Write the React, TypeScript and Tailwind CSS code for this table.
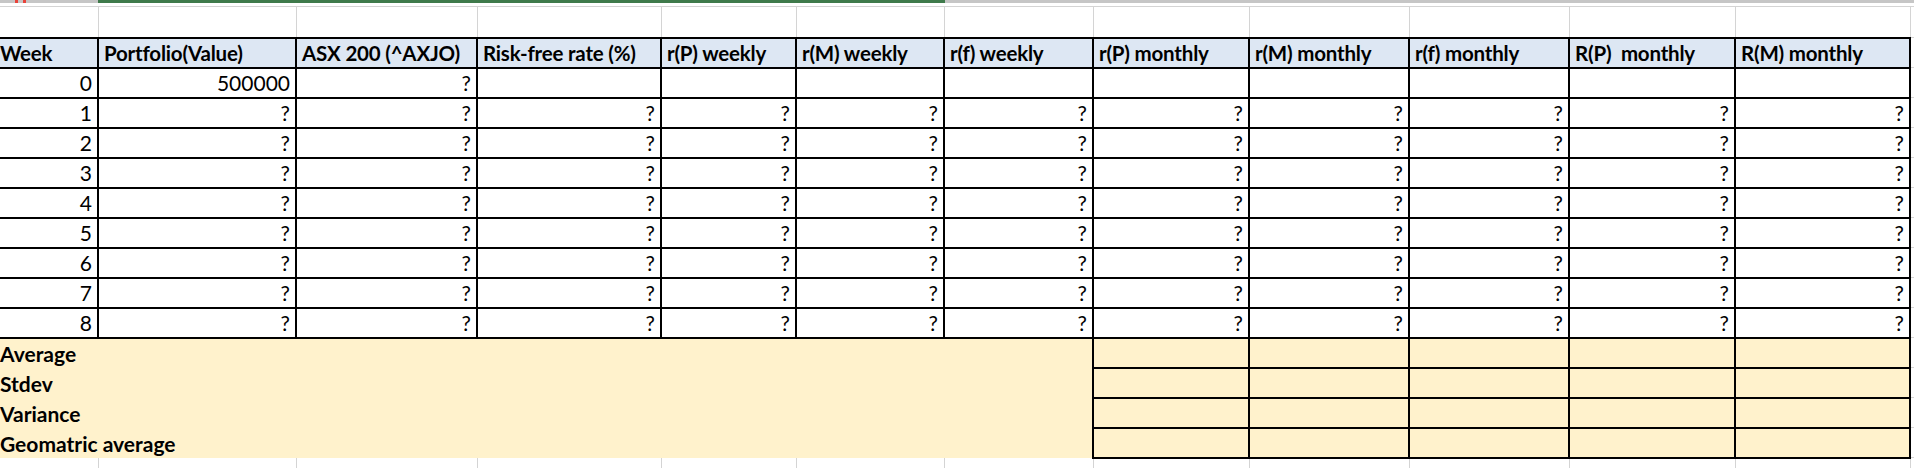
import React from "react"

// column widths measured between the border lines of the sheet
const cols = [98, 198, 181, 184, 135, 148, 149, 156, 160, 160, 166, 175, 40]

const headers = [
  "Week",
  "Portfolio(Value)",
  "ASX 200 (^AXJO)",
  "Risk-free rate (%)",
  "r(P) weekly",
  "r(M) weekly",
  "r(f) weekly",
  "r(P) monthly",
  "r(M) monthly",
  "r(f) monthly",
  "R(P)  monthly",
  "R(M) monthly",
]

const summary = ["Average", "Stdev", "Variance", "Geomatric average"]

const grid = "border border-[#d4d4d4]"
const black = "border-2 border-black"
const txt = "align-bottom leading-[22px] pb-[3px] whitespace-pre overflow-hidden"

export default function App() {
  const weeks = [0, 1, 2, 3, 4, 5, 6, 7, 8]

  return (
    <div className="w-[1914px] h-[468px] overflow-hidden bg-white text-black font-['Lato',sans-serif] text-[21px]">
      {/* top strip of the window: gray line with the green selection edge */}
      <div className="flex h-[3px] bg-[#c6c6c6]">
        <div className="w-[98px] flex gap-[5px] pl-[15px]">
          <div className="w-[3px] h-[3px] bg-[#e8433a]" />
          <div className="w-[3px] h-[3px] bg-[#e8433a]" />
        </div>
        <div className="w-[847px] bg-[#3f7a4b]" />
      </div>
      <div className="h-[3px]" />

      <table className="table-fixed border-collapse w-[1950px]">
        <colgroup>
          {cols.map((w, i) => (
            <col key={i} style={{ width: w }} />
          ))}
        </colgroup>
        <tbody>
          {/* empty row above the header */}
          <tr className="h-[31px]">
            {cols.map((_, i) => (
              <td key={i} className={`${grid} ${i === 0 ? "border-l-0" : ""}`} />
            ))}
          </tr>

          {/* header */}
          <tr className="h-[30px]">
            {headers.map((h, i) => (
              <td
                key={i}
                className={`${black} ${i === 0 ? "border-l-0 pl-0" : "pl-[5px]"} bg-[#dde7f3] font-bold text-left text-[20.5px] tracking-[-0.2px] ${txt}`}
              >
                {h}
              </td>
            ))}
            <td className={grid} />
          </tr>

          {weeks.map((w) => (
            <tr key={w} className="h-[30px]">
              <td className={`${black} border-l-0 text-right pr-[5px] ${txt}`}>{w}</td>
              <td className={`${black} text-right pr-[5px] ${txt}`}>{w === 0 ? "500000" : "?"}</td>
              <td className={`${black} text-right pr-[5px] ${txt}`}>?</td>
              {headers.slice(3).map((_, i) => (
                <td key={i} className={`${black} text-right pr-[5px] ${txt}`}>
                  {w === 0 ? "" : "?"}
                </td>
              ))}
              <td className={grid} />
            </tr>
          ))}

          {summary.map((s, r) => (
            <tr key={s} className="h-[30px]">
              <td
                colSpan={7}
                className={`bg-[#fff2cc] font-bold text-left pl-0 ${txt} border-l-0 ${
                  r === 0 ? "border-t-2 border-t-black" : "border-t border-t-transparent [border-top-style:hidden]"
                } ${r === 3 ? "[border-bottom-style:hidden]" : "border-b border-b-transparent [border-bottom-style:hidden]"}`}
              >
                {s}
              </td>
              {[0, 1, 2, 3, 4].map((i) => (
                <td key={i} className={`${black} bg-[#fff2cc]`} />
              ))}
              <td className={grid} />
            </tr>
          ))}

          {/* partial row at the bottom edge */}
          <tr className="h-[30px]">
            {cols.map((_, i) => (
              <td key={i} className={`${grid} ${i === 0 ? "border-l-0" : ""}`} />
            ))}
          </tr>
        </tbody>
      </table>
    </div>
  )
}
